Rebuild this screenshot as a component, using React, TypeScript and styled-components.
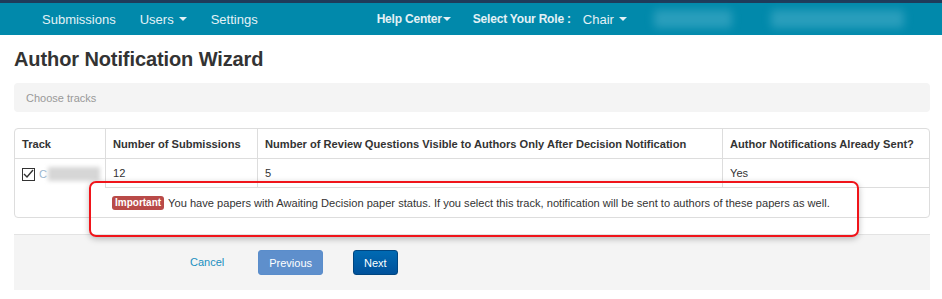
import React from 'react';
import styled, { createGlobalStyle, css } from "styled-components";

const GlobalStyle = createGlobalStyle`
  html, body {
    margin: 0;
    padding: 0;
    background: #fff;
    font-family: "Liberation Sans", Arial, sans-serif;
    color: #333;
  }
  * { box-sizing: border-box; }
`;

const TopStrip = styled.div`
  height: 3px;
  background: #1f3b5a;
`;

const NavBar = styled.nav`
  display: flex;
  align-items: center;
  height: 32px;
  background: #0189ab;
  padding-left: 42px;
  font-size: 13px;
  color: #e3f1f6;
`;

const NavGroup = styled.ul<{ $gap: number; $offset?: number }>`
  display: flex;
  align-items: center;
  list-style: none;
  margin: 0 0 0 ${(p) => p.$offset ?? 0}px;
  padding: 0;
  gap: ${(p) => p.$gap}px;
`;

const NavItem = styled.li<{ $bold?: boolean; $pull?: number }>`
  display: flex;
  align-items: center;
  white-space: nowrap;
  font-weight: ${(p) => (p.$bold ? 700 : 400)};
  font-size: ${(p) => (p.$bold ? 12 : 13)}px;
  letter-spacing: ${(p) => (p.$bold ? "-0.2px" : "0")};
  margin-left: ${(p) => p.$pull ?? 0}px;
`;

const Caret = styled.span<{ $tight?: boolean }>`
  display: inline-block;
  width: 0;
  height: 0;
  margin-left: ${(p) => (p.$tight ? 1 : 5)}px;
  border-left: 4px solid transparent;
  border-right: 4px solid transparent;
  border-top: 4px solid #e3f1f6;
`;

const Blurred = styled.div<{ $w: number; $h: number }>`
  width: ${(p) => p.$w}px;
  height: ${(p) => p.$h}px;
  background: #45acc7;
  opacity: 0.6;
  filter: blur(4px);
  border-radius: 3px;
`;

const Main = styled.main`
  position: relative;
  display: flow-root;
  padding: 0 12px 0 14px;
`;

const Title = styled.h1`
  margin: 10px 0 10px;
  font-size: 20px;
  line-height: 28px;
  font-weight: 700;
  color: #333;
  letter-spacing: -0.1px;
`;

const Breadcrumb = styled.div`
  height: 29px;
  background: #f4f4f4;
  border-radius: 4px;
  padding: 0 12px;
  display: flex;
  align-items: center;
  font-size: 11px;
  color: #999;
`;

const Table = styled.table`
  margin-top: 16px;
  width: 916px;
  border-collapse: separate;
  border-spacing: 0;
  border: 1px solid #ddd;
  border-radius: 4px;
  font-size: 11.1px;
  table-layout: fixed;
`;

const cell = css`
  padding: 0 7px;
  line-height: 14px;
  text-align: left;
  vertical-align: middle;
  border-left: 1px solid #ddd;
  &:first-child { border-left: none; }
`;

const Th = styled.th`
  ${cell};
  height: 29px;
  font-weight: 700;
`;

const Td = styled.td<{ $h?: number }>`
  ${cell};
  height: ${(p) => p.$h ?? 29}px;
  border-top: 1px solid #ddd;
`;

const TrackCell = styled.div`
  display: flex;
  align-items: center;
  gap: 4px;
  margin-top: 8px;
`;

const Check = styled.span`
  width: 13px;
  height: 13px;
  border: 1px solid #333;
  display: flex;
  align-items: center;
  justify-content: center;
  background: #fff;
`;

const TrackName = styled.span`
  display: flex;
  align-items: center;
  color: #9bb7cf;
  span {
    display: inline-block;
    width: 52px;
    height: 14px;
    margin-left: 1px;
    background: #d6d6d6;
    filter: blur(2px);
  }
`;

const Label = styled.span`
  display: inline-block;
  background: #b94a48;
  color: #fff;
  font-weight: 700;
  font-size: 10px;
  line-height: 14px;
  padding: 0 3px;
  border-radius: 3px;
  margin-right: 4px;
  vertical-align: 1px;
`;

const Highlight = styled.div`
  position: absolute;
  left: 89px;
  top: 146px;
  width: 770px;
  height: 56px;
  border: 2px solid #f0141a;
  border-radius: 7px;
  box-shadow: 0 2px 6px rgba(0, 0, 0, 0.25);
  pointer-events: none;
`;

const Actions = styled.div`
  margin-top: 16px;
  width: 916px;
  height: 56px;
  background: #f4f4f4;
  border-top: 1px solid #e3e3e3;
  display: flex;
  align-items: flex-start;
  padding: 15px 0 0 176px;
`;

const CancelLink = styled.a`
  font-size: 11px;
  color: #1a8fc0;
  text-decoration: none;
  margin-top: 6px;
  margin-right: 34px;
`;

const Button = styled.button<{ $primary?: boolean }>`
  height: 25px;
  padding: 0 10px;
  font-family: inherit;
  font-size: 11px;
  color: #fff;
  border-radius: 3px;
  margin-right: 30px;
  border: 1px solid ${(p) => (p.$primary ? "#00457f" : "#5a8dcb")};
  background: ${(p) =>
    p.$primary ? "linear-gradient(#006ab3, #00519b)" : "#5e8fcc"};
`;

export default function App() {
  return (
    <>
      <GlobalStyle />
      <TopStrip />
      <NavBar>
        <NavGroup $gap={24}>
          <NavItem>Submissions</NavItem>
          <NavItem>Users<Caret /></NavItem>
          <NavItem>Settings</NavItem>
        </NavGroup>
        <NavGroup $gap={22} $offset={119}>
          <NavItem $bold>Help Center<Caret $tight /></NavItem>
          <NavItem $bold>Select Your Role :</NavItem>
          <NavItem $pull={-10}>Chair<Caret /></NavItem>
        </NavGroup>
        <NavGroup $gap={39} $offset={27}>
          <Blurred $w={78} $h={18} />
          <Blurred $w={133} $h={18} />
        </NavGroup>
      </NavBar>

      <Main>
        <Title>Author Notification Wizard</Title>
        <Breadcrumb>Choose tracks</Breadcrumb>

        <Table>
          <colgroup>
            <col style={{ width: 90 }} />
            <col style={{ width: 152 }} />
            <col style={{ width: 465 }} />
            <col />
          </colgroup>
          <thead>
            <tr>
              <Th>Track</Th>
              <Th>Number of Submissions</Th>
              <Th>Number of Review Questions Visible to Authors Only After Decision Notification</Th>
              <Th>Author Notifications Already Sent?</Th>
            </tr>
          </thead>
          <tbody>
            <tr>
              <Td rowSpan={2} style={{ verticalAlign: "top" }}>
                <TrackCell>
                  <Check>
                    <svg width="11" height="10" viewBox="0 0 11 10">
                      <path d="M1 5 L4 8 L10 1" fill="none" stroke="#333" strokeWidth="1.4" />
                    </svg>
                  </Check>
                  <TrackName>C<span /></TrackName>
                </TrackCell>
              </Td>
              <Td>12</Td>
              <Td>5</Td>
              <Td>Yes</Td>
            </tr>
            <tr>
              <Td colSpan={3} $h={30}>
                <Label>Important</Label>
                You have papers with Awaiting Decision paper status. If you select this track, notification will be sent to authors of these papers as well.
              </Td>
            </tr>
          </tbody>
        </Table>

        <Highlight />

        <Actions>
          <CancelLink href="#">Cancel</CancelLink>
          <Button disabled>Previous</Button>
          <Button $primary>Next</Button>
        </Actions>
      </Main>
    </>
  );
}
